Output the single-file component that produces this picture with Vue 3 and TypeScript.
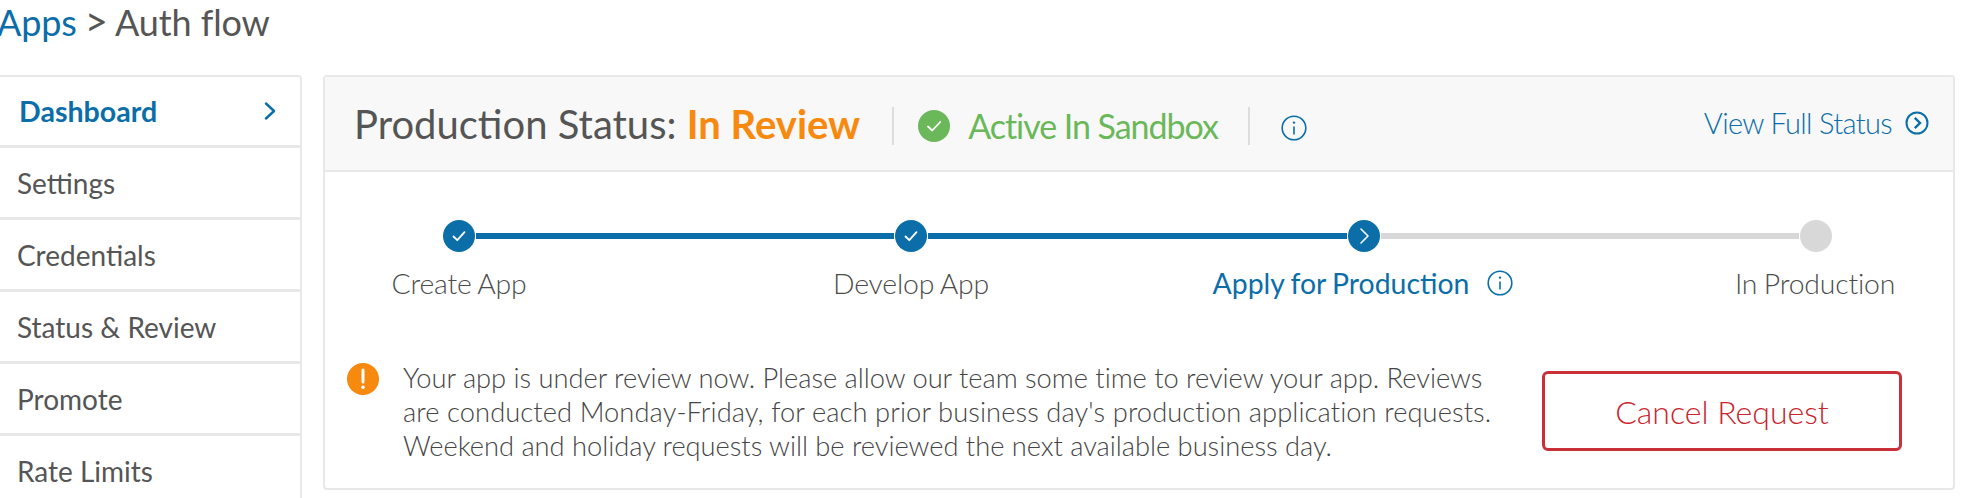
<script setup lang="ts">
const navItems = ['Dashboard', 'Settings', 'Credentials', 'Status & Review', 'Promote', 'Rate Limits']

const steps = [
  { label: 'Create App', state: 'done' },
  { label: 'Develop App', state: 'done' },
  { label: 'Apply for Production', state: 'current' },
  { label: 'In Production', state: 'todo' }
]
</script>

<template>
  <div class="page">
    <h1 class="crumbs"><span class="crumb-link">Apps</span><span class="crumb-sep">&gt;</span>Auth flow</h1>

    <div class="columns">
      <nav class="side-nav">
        <div
          v-for="(item, i) in navItems"
          :key="item"
          class="nav-item"
          :class="{ active: i === 0 }"
        >
          {{ item }}
          <svg v-if="i === 0" class="nav-chevron" viewBox="0 0 12 18" width="12" height="18">
            <path d="M2 1.5 10 9l-8 7.5" fill="none" stroke="currentColor" stroke-width="2.4" stroke-linecap="round" stroke-linejoin="round" />
          </svg>
        </div>
      </nav>

      <section class="panel">
        <header class="panel-head">
          <h2 class="status-title">Production Status: <b>In Review</b></h2>
          <span class="sandbox">
            <svg class="sandbox-icon" viewBox="0 0 32 32" width="32" height="32">
              <circle cx="16" cy="16" r="16" fill="#6bb85a" />
              <path d="M10 16.5l4.2 4 8-8.5" fill="none" stroke="#fff" stroke-width="1.8" stroke-linecap="round" stroke-linejoin="round" />
            </svg>
            Active In Sandbox
          </span>
          <svg class="info-icon head-info" viewBox="0 0 26 26" width="26" height="26">
            <circle cx="13" cy="13" r="11.8" fill="none" stroke="currentColor" stroke-width="1.6" />
            <path d="M13 11.5v8" stroke="currentColor" stroke-width="1.6" />
            <circle cx="13" cy="7.6" r="1.2" fill="currentColor" />
          </svg>
          <a class="full-status">
            View Full Status
            <svg viewBox="0 0 24 24" width="24" height="24">
              <circle cx="12" cy="12" r="10.5" fill="none" stroke="currentColor" stroke-width="2" />
              <path d="M9.8 6.8 15 12l-5.2 5.2" fill="none" stroke="currentColor" stroke-width="2.4" />
            </svg>
          </a>
        </header>

        <div class="track">
          <template v-for="(step, i) in steps" :key="step.label">
            <span class="dot" :class="step.state">
              <svg v-if="step.state === 'done'" viewBox="0 0 32 32" width="32" height="32">
                <path d="M10.5 16.5l3.8 3.7 7.2-8" fill="none" stroke="#fff" stroke-width="1.8" stroke-linecap="round" stroke-linejoin="round" />
              </svg>
              <svg v-else-if="step.state === 'current'" viewBox="0 0 32 32" width="32" height="32">
                <path d="M13 9l7 7-7 7" fill="none" stroke="#fff" stroke-width="1.6" stroke-linecap="round" stroke-linejoin="round" />
              </svg>
            </span>
            <span v-if="i < steps.length - 1" class="line" :class="{ filled: step.state === 'done' }"></span>
          </template>
        </div>

        <div class="labels">
          <span v-for="step in steps" :key="step.label" class="step-label" :class="step.state">
            {{ step.label }}
            <svg v-if="step.state === 'current'" class="info-icon" viewBox="0 0 26 26" width="26" height="26">
              <circle cx="13" cy="13" r="11.8" fill="none" stroke="currentColor" stroke-width="1.6" />
              <path d="M13 11.5v8" stroke="currentColor" stroke-width="1.6" />
              <circle cx="13" cy="7.6" r="1.2" fill="currentColor" />
            </svg>
          </span>
        </div>

        <div class="notice">
          <svg class="notice-icon" viewBox="0 0 32 32" width="32" height="32">
            <circle cx="16" cy="16" r="16" fill="#f7890f" />
            <path d="M16 7v12" stroke="#fff" stroke-width="3" stroke-linecap="round" />
            <circle cx="16" cy="24.2" r="1.8" fill="#fff" />
          </svg>
          <p class="notice-text">
            <span>Your app is under review now. Please allow our team some time to review your app. Reviews</span>
            <span class="wide">are conducted Monday-Friday, for each prior business day's production application requests.</span>
            <span>Weekend and holiday requests will be reviewed the next available business day.</span>
          </p>
          <button class="cancel-btn" type="button">Cancel Request</button>
        </div>
      </section>
    </div>
  </div>
</template>

<style>
html,
body {
  margin: 0;
  background: #fff;
  overflow: hidden;
}
</style>

<style scoped>
.page {
  width: 1982px;
  height: 498px;
  overflow: hidden;
  font-family: Lato, "Open Sans", sans-serif;
  color: #555;
}

.crumbs {
  height: 75px;
  margin: 0 0 0 -3px;
  font-size: 36px;
  font-weight: 400;
  line-height: 42px;
  letter-spacing: -0.1px;
  white-space: nowrap;
}

.crumb-link {
  color: #0b6ea8;
}

.crumb-sep {
  margin: 0 7px 0 8px;
  font-size: 40px;
}

.columns {
  display: flex;
  align-items: flex-start;
  gap: 21px;
}

.side-nav {
  width: 302px;
  flex: none;
  box-sizing: border-box;
  border: 2px solid #e8e8e8;
  border-left: none;
  border-radius: 0 4px 0 0;
}

.nav-item {
  height: 71px;
  box-sizing: border-box;
  display: flex;
  align-items: center;
  justify-content: space-between;
  padding: 0 24px 0 17px;
  border-bottom: 3px solid #e8e8e8;
  font-size: 28px;
  margin-bottom: 1px;
}

.nav-item.active {
  color: #0b6ea8;
  font-weight: 700;
  font-size: 28.6px;
  padding-left: 19px;
}

.panel {
  width: 1632px;
  height: 415px;
  flex: none;
  box-sizing: border-box;
  border: 2px solid #e8e8e8;
  border-radius: 4px;
}

.panel-head {
  height: 95px;
  box-sizing: border-box;
  display: flex;
  align-items: center;
  padding: 0 24px 0 29px;
  background: #f8f8f8;
  border-bottom: 2px solid #e8e8e8;
}

.status-title {
  margin: 0;
  padding-right: 32px;
  font-size: 40px;
  font-weight: 400;
  white-space: nowrap;
}

.status-title b {
  color: #f7890f;
  font-weight: 700;
}

.sandbox {
  display: flex;
  align-items: center;
  gap: 18px;
  height: 38px;
  margin-top: 4px;
  padding: 0 30px 0 24px;
  border-left: 2px solid #ddd;
  border-right: 2px solid #ddd;
  color: #6bb85a;
  font-size: 34px;
  letter-spacing: -1.05px;
  white-space: nowrap;
}

.info-icon {
  color: #0b6ea8;
  flex: none;
}

.head-info {
  margin-left: 31px;
  margin-top: 9px;
}

.full-status {
  margin-left: auto;
  display: flex;
  align-items: center;
  gap: 13px;
  color: #0b6ea8;
  font-size: 29px;
  font-weight: 300;
  letter-spacing: -0.65px;
  margin-top: -2px;
  white-space: nowrap;
}

.track {
  display: flex;
  align-items: center;
  margin: 48px 121px 0 118px;
}

.dot {
  width: 32px;
  height: 32px;
  flex: none;
  border-radius: 50%;
  background: #0b6ea8;
}

.dot svg {
  display: block;
}

.dot.todo {
  background: #d8d8d8;
}

.line {
  flex: 1;
  height: 6px;
  margin: 0 1px;
  background: #d8d8d8;
}

.line.filled {
  background: #0b6ea8;
}

.labels {
  display: grid;
  grid-template-columns: repeat(4, 260px);
  column-gap: 192px;
  margin: 13px 0 0 4px;
}

.step-label {
  justify-self: center;
  display: flex;
  align-items: center;
  gap: 18px;
  height: 36px;
  color: #4c4c4c;
  font-size: 28.4px;
  font-weight: 300;
  letter-spacing: -0.2px;
  word-spacing: -1px;
  white-space: nowrap;
}

.step-label.current {
  color: #0b6ea8;
  font-weight: 400;
  letter-spacing: 0;
}

.notice {
  display: flex;
  align-items: flex-start;
  margin: 60px 0 0 22px;
}

.notice-icon {
  flex: none;
  margin-top: 2px;
}

.notice-text {
  width: 1139px;
  flex: none;
  margin: 0 0 0 24px;
  color: #454545;
  font-size: 27.3px;
  font-weight: 300;
  line-height: 34px;
  letter-spacing: -0.03px;
  white-space: nowrap;
}

.notice-text span {
  display: block;
}

.notice-text .wide {
  letter-spacing: 0.08px;
}

.cancel-btn {
  width: 360px;
  height: 80px;
  flex: none;
  margin-top: 10px;
  box-sizing: border-box;
  border: 3px solid #c9303a;
  border-radius: 6px;
  background: #fff;
  color: #c9252d;
  font: 300 32px Lato, sans-serif;
}
</style>
